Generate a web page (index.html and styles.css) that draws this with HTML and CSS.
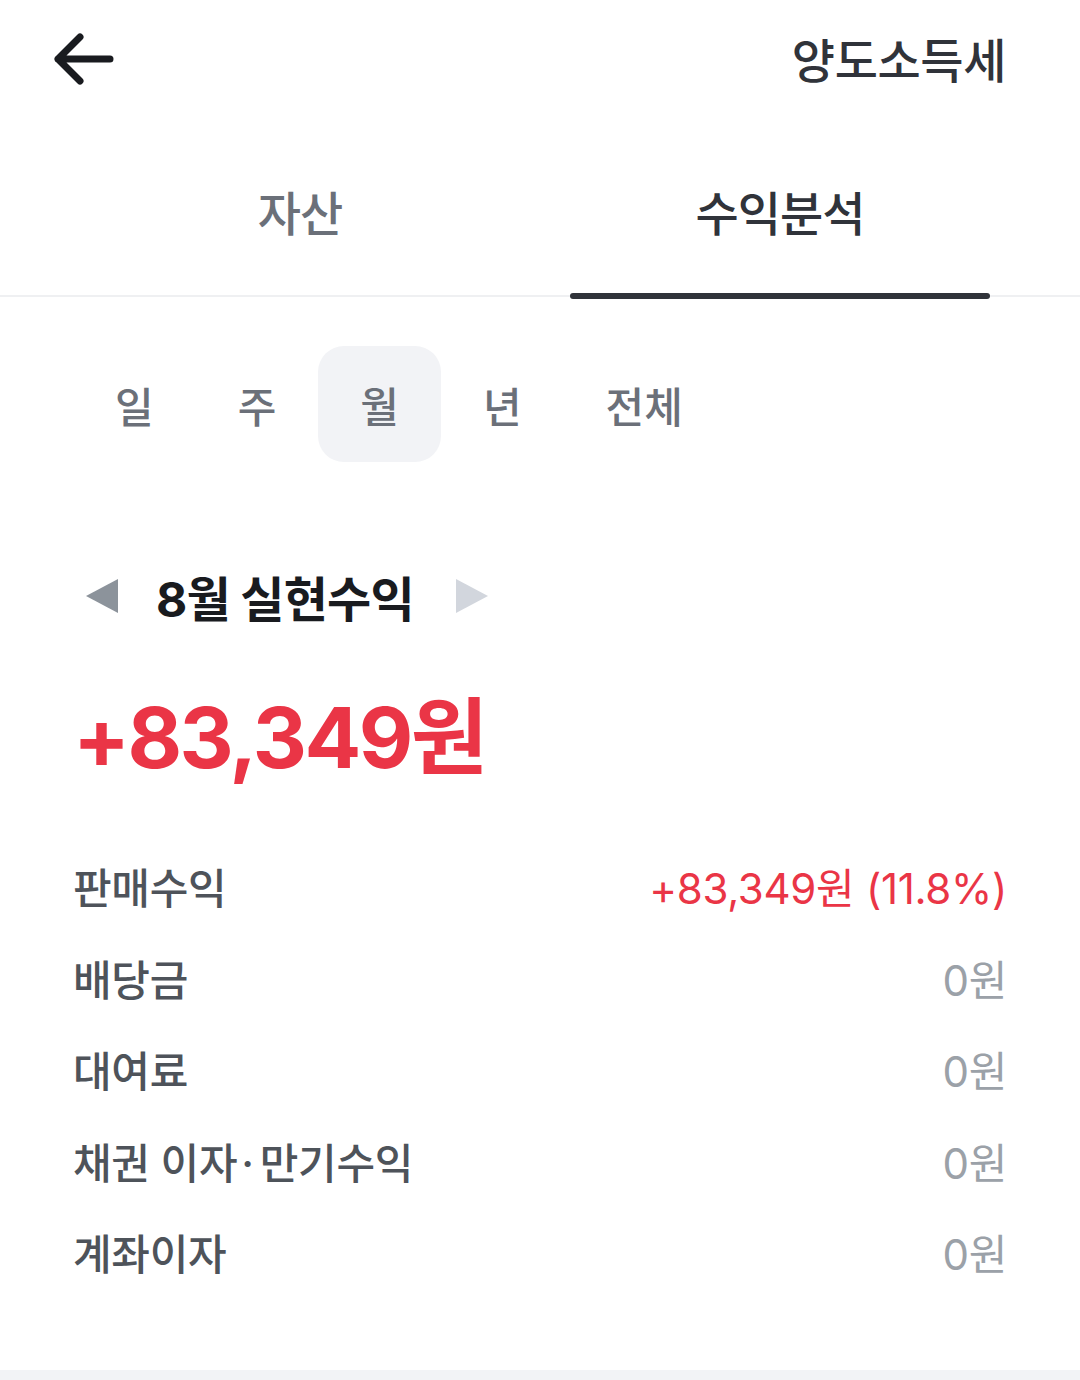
FILE: index.html
```html
<!DOCTYPE html>
<html lang="ko">
<head>
    <meta charset="utf-8">
    <title>수익분석</title>
    <link rel="stylesheet" href="styles.css">
</head>
<body>
    <div class="topbar">
        <button class="back" aria-label="뒤로">
            <svg width="60" height="56" viewBox="0 0 60 56">
                <path d="M26 6 L4 28 L26 50 M4 28 L56 28" fill="none" stroke="#191b1f" stroke-width="7" stroke-linecap="round" stroke-linejoin="round"/>
            </svg>
        </button>
        <span class="topbar-title">양도소득세</span>
    </div>

    <div class="tabs">
        <div class="tab">자산</div>
        <div class="tab active">수익분석</div>
    </div>

    <div class="periods">
        <span class="period">일</span>
        <span class="period">주</span>
        <span class="period selected">월</span>
        <span class="period">년</span>
        <span class="period">전체</span>
    </div>

    <div class="month-head">
        <span class="arrow left"></span>
        <h2>8월 실현수익</h2>
        <span class="arrow right"></span>
    </div>

    <div class="total">+83,349원</div>

    <div class="rows">
        <div class="row">
            <span class="label">판매수익</span>
            <span class="amount red">+83,349원 (11.8%)</span>
        </div>
        <div class="row">
            <span class="label">배당금</span>
            <span class="amount">0원</span>
        </div>
        <div class="row">
            <span class="label">대여료</span>
            <span class="amount">0원</span>
        </div>
        <div class="row">
            <span class="label">채권 이자<span class="dot">·</span>만기수익</span>
            <span class="amount">0원</span>
        </div>
        <div class="row">
            <span class="label">계좌이자</span>
            <span class="amount">0원</span>
        </div>
    </div>

    <div class="bottom-band"></div>
</body>
</html>
```

FILE: styles.css
```css
:root {
    --text-strong: #191b1f;
    --text-dark: #30333a;
    --text-mid: #4e535a;
    --text-gray: #6b7079;
    --text-light: #9ba1a8;
    --red: #ea3546;
    --line: #eff0f2;
    --fill: #f2f3f6;
}

body {
    margin: 0;
    background: #fff;
    font-family: Inter, "Noto Sans CJK KR", sans-serif;
    color: var(--text-strong);
}

.topbar {
    height: 118px;
    display: flex;
    align-items: center;
    justify-content: space-between;
    padding: 0 74px 0 54px;
}

.back {
    border: none;
    background: none;
    padding: 0;
    display: flex;
}

.topbar-title {
    font-size: 47px;
    font-weight: 500;
    letter-spacing: -0.4px;
    padding-bottom: 4px;
    color: var(--text-dark);
}

.tabs {
    display: flex;
    padding: 0 60px;
    border-bottom: 2px solid var(--line);
}

.tab {
    flex: 1;
    padding-top: 66px;
    text-align: center;
    font-size: 47px;
    line-height: 60px;
    font-weight: 500;
    letter-spacing: -1px;
    color: var(--text-gray);
}

.tab::after {
    content: "";
    display: block;
    height: 6px;
    margin: 49px 30px -4px;
    border-radius: 3px;
}

.tab.active {
    color: var(--text-dark);
}

.tab.active::after {
    background: var(--text-dark);
}

.periods {
    display: flex;
    padding-left: 73px;
    margin-top: 49px;
}

.period {
    height: 116px;
    padding: 0 42px;
    display: flex;
    align-items: center;
    font-size: 42px;
    font-weight: 500;
    letter-spacing: 0;
    color: var(--text-gray);
    border-radius: 26px;
}

.period.selected {
    background: var(--fill);
}

.month-head {
    display: flex;
    align-items: center;
    height: 60px;
    margin-top: 104px;
    padding-left: 86px;
}

.month-head h2 {
    margin: 0 42px 0 38px;
    font-size: 48px;
    font-weight: 700;
    letter-spacing: -0.8px;
    color: var(--text-strong);
}

.arrow {
    width: 0;
    height: 0;
    border-top: 17px solid transparent;
    border-bottom: 17px solid transparent;
}

.arrow.left {
    border-right: 32px solid #8c939b;
}

.arrow.right {
    border-left: 32px solid #d2d6dd;
}

.total {
    margin-top: 60px;
    padding-left: 73px;
    font-size: 84px;
    line-height: 104px;
    font-weight: 700;
    letter-spacing: -2.6px;
    color: var(--red);
}

.rows {
    margin-top: 50px;
    padding: 0 73px 0 73px;
}

.row {
    display: flex;
    justify-content: space-between;
    align-items: center;
    height: 91.5px;
}

.label {
    font-size: 42px;
    font-weight: 500;
    letter-spacing: -0.3px;
    color: var(--text-mid);
}

.label .dot {
    margin: 0 6px 0 4px;
}

.amount {
    font-size: 42px;
    font-weight: 400;
    letter-spacing: -0.3px;
    color: var(--text-light);
}

.amount.red {
    color: var(--red);
}

.bottom-band {
    margin-top: 72px;
    height: 40px;
    background: var(--fill);
}
```
